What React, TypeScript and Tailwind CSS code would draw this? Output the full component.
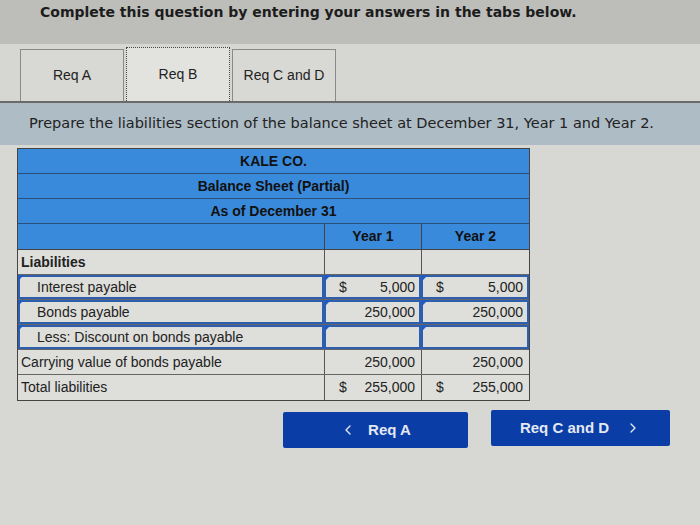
import React from "react";
import { ChevronLeft, ChevronRight } from "lucide-react";

const font = { fontFamily: '"Liberation Sans", Arial, sans-serif' };

function Tri() {
  return (
    <span className="absolute left-0 top-0 w-0 h-0 border-t-[6px] border-r-[6px] border-t-[#1f5bc4] border-r-transparent" />
  );
}

type Row = {
  label: string;
  indent?: boolean;
  input?: boolean;
  bold?: boolean;
  y1?: string;
  y2?: string;
  d1?: boolean;
  d2?: boolean;
};

const rows: Row[] = [
  { label: "Liabilities", bold: true },
  { label: "Interest payable", indent: true, input: true, y1: "5,000", y2: "5,000", d1: true, d2: true },
  { label: "Bonds payable", indent: true, input: true, y1: "250,000", y2: "250,000" },
  { label: "Less: Discount on bonds payable", indent: true, input: true },
  { label: "Carrying value of bonds payable", y1: "250,000", y2: "250,000" },
  { label: "Total liabilities", y1: "255,000", y2: "255,000", d1: true, d2: true },
];

function ValueCell({ value, dollar, input, w }: { value?: string; dollar?: boolean; input?: boolean; w: string }) {
  return (
    <div
      className={`relative ${w} h-full flex items-center justify-between px-1.5 border-l border-[#555] ${
        input ? "outline outline-2 -outline-offset-2 outline-[#2d5fae]" : ""
      }`}
    >
      {input && <Tri />}
      <span className="pl-2">{dollar ? "$" : ""}</span>
      <span>{value ?? ""}</span>
    </div>
  );
}

export default function App() {
  return (
    <div className="w-[700px] h-[525px] bg-[#d7d7d3] text-[#222] overflow-hidden" style={font}>
      <div className="h-[44px] bg-[#bdbdb9] pl-[40px] pt-[2px]">
        <p className="text-[14px] font-bold text-[#1c1c1c]" style={{ fontFamily: '"DejaVu Sans", sans-serif' }}>
          Complete this question by entering your answers in the tabs below.
        </p>
      </div>
      <div className="h-[59px] bg-[#d6d6d2] flex items-end pl-[20px] border-b-2 border-[#6a6a68]">
        <div className="w-[104px] h-[52px] border border-[#8a8a88] border-b-0 flex items-center justify-center text-[14px] bg-[#d8d8d4]">
          Req A
        </div>
        <div className="w-[104px] h-[54px] ml-[2px] border border-dotted border-[#444] border-b-0 flex items-center justify-center text-[14px] bg-[#e2e2de]">
          Req B
        </div>
        <div className="w-[104px] h-[52px] ml-[2px] border border-[#8a8a88] border-b-0 flex items-center justify-center text-[14px] bg-[#d8d8d4]">
          Req C and D
        </div>
      </div>
      <div className="h-[42px] bg-[#aebcc6] pl-[29px] flex items-center">
        <p className="text-[14.5px] text-[#222]" style={{ fontFamily: '"DejaVu Sans", sans-serif' }}>
          Prepare the liabilities section of the balance sheet at December 31, Year 1 and Year 2.
        </p>
      </div>
      <div className="pl-[17px] pt-[3px]">
        <div className="w-[513px] border border-[#444] text-[14px]">
          {["KALE CO.", "Balance Sheet (Partial)", "As of December 31"].map((t) => (
            <div key={t} className="h-[25px] bg-[#3a8adb] border-b border-[#2a4f7a] flex items-center justify-center font-bold text-[#111]">
              {t}
            </div>
          ))}
          <div className="h-[26px] bg-[#3a8adb] border-b border-[#444] flex font-bold text-[#111]">
            <div className="w-[306px]" />
            <div className="w-[97px] border-l border-[#444] flex items-center justify-center">Year 1</div>
            <div className="flex-1 border-l border-[#444] flex items-center justify-center">Year 2</div>
          </div>
          {rows.map((r, i) => (
            <div
              key={r.label}
              className={`h-[25px] flex ${i < rows.length - 1 ? "border-b border-[#666]" : ""} bg-[#dededa]`}
            >
              <div
                className={`relative w-[306px] h-full flex items-center ${r.indent ? "pl-[19px]" : "pl-[3px]"} ${
                  r.bold ? "font-bold" : ""
                } ${r.input ? "outline outline-2 -outline-offset-2 outline-[#2d5fae]" : ""}`}
              >
                {r.input && <Tri />}
                {r.label}
              </div>
              <ValueCell w="w-[97px]" value={r.y1} dollar={r.d1} input={r.input} />
              <ValueCell w="flex-1" value={r.y2} dollar={r.d2} input={r.input} />
            </div>
          ))}
        </div>
      </div>
      <div className="flex pl-[283px] pt-[11px] gap-[23px]">
        <button className="w-[185px] h-[36px] rounded-[2px] bg-[#0a3ea6] text-[#e4e8f2] font-bold text-[15px] flex items-center justify-center gap-3">
          <ChevronLeft size={16} strokeWidth={2} />
          <span>Req A</span>
        </button>
        <button className="w-[179px] h-[36px] -mt-[2px] rounded-[2px] bg-[#0a3ea6] text-[#e4e8f2] font-bold text-[15px] flex items-center justify-center gap-4">
          <span>Req C and D</span>
          <ChevronRight size={16} strokeWidth={2} />
        </button>
      </div>
    </div>
  );
}
